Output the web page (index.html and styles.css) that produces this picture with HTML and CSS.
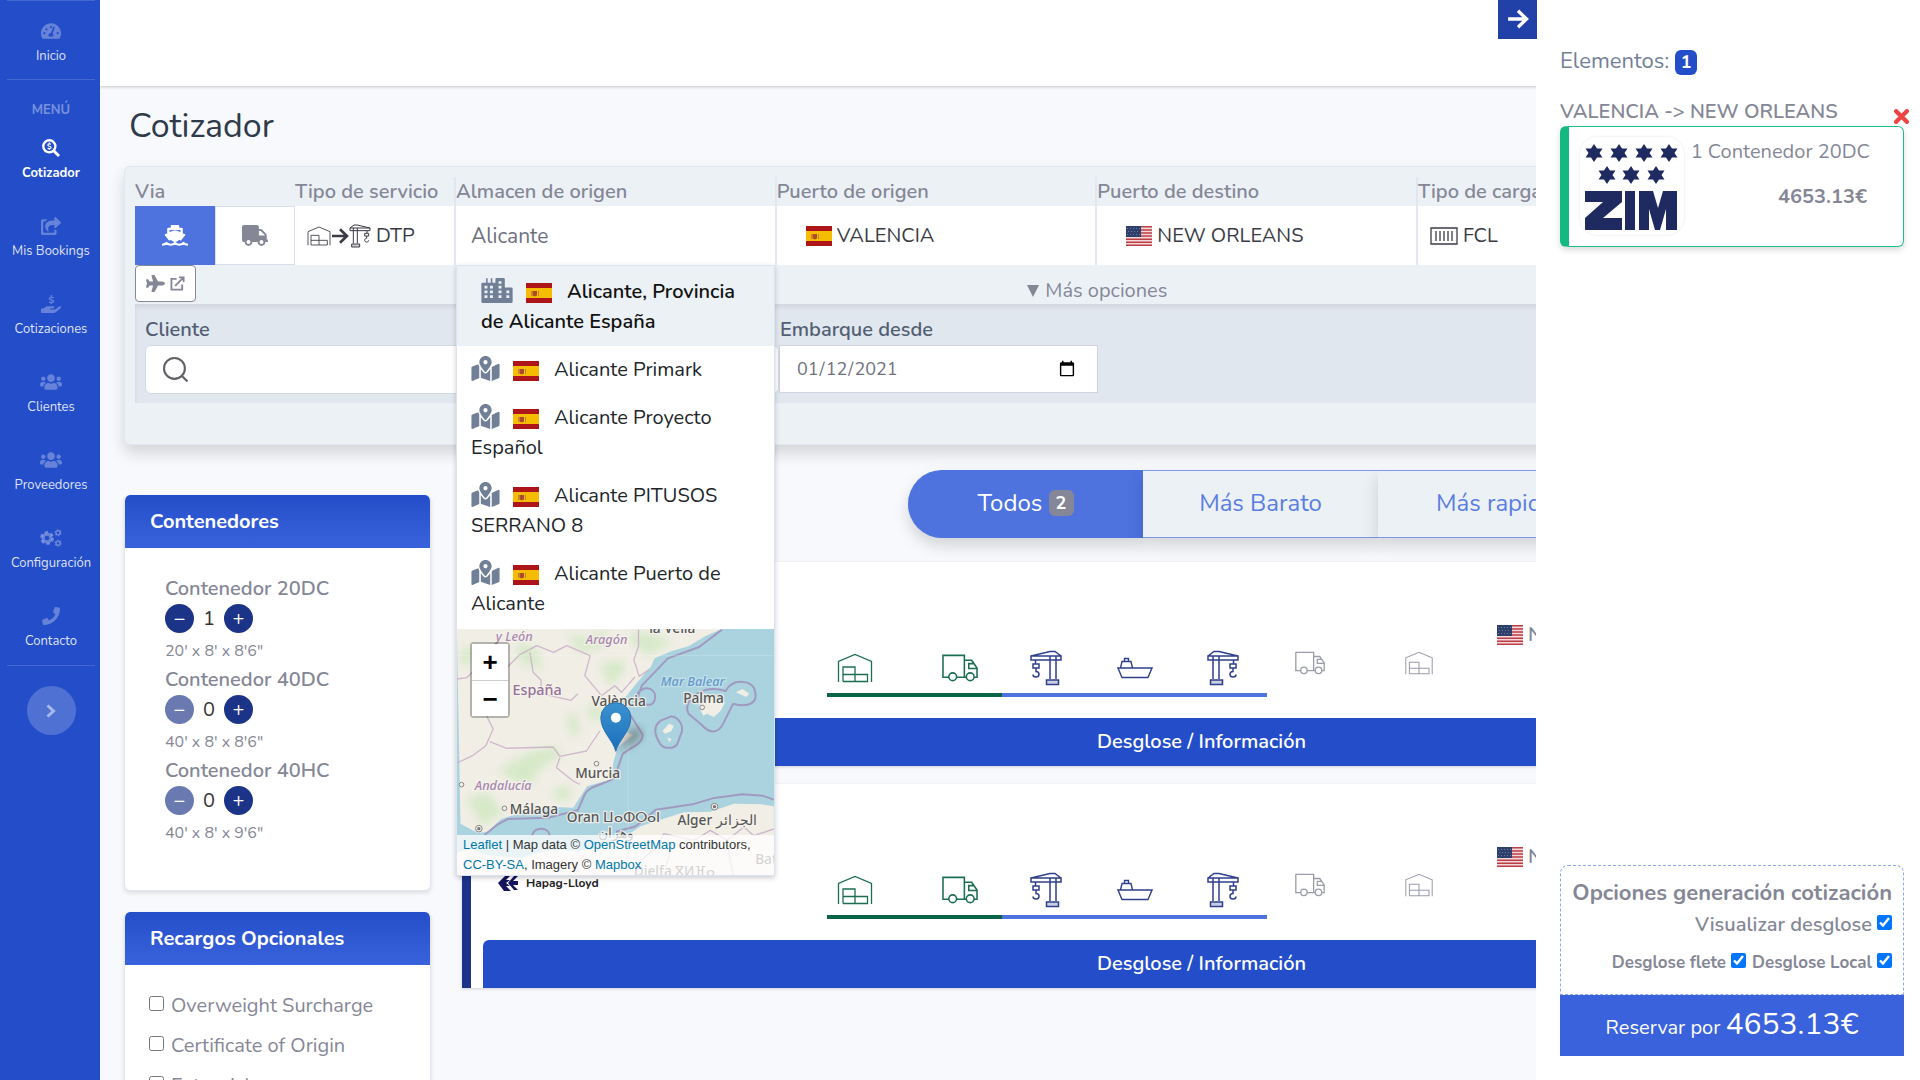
FILE: index.html
```html
<!DOCTYPE html>
<html lang="es">
<head>
<meta charset="utf-8">
<meta name="viewport" content="width=device-width, initial-scale=1">
<title>Cotizador</title>
<link rel="stylesheet" href="styles.css">
</head>
<body>
<svg class="sprite" aria-hidden="true">
  <symbol id="i-users" viewBox="0 0 640 512"><path d="M96 224c35.300 0 64-28.700 64-64s-28.700-64-64-64-64 28.700-64 64 28.700 64 64 64zm448 0c35.300 0 64-28.700 64-64s-28.700-64-64-64-64 28.700-64 64 28.700 64 64 64zm32 32h-64c-17.600 0-33.500 7.100-45.100 18.600 40.300 22.100 68.900 62 75.100 109.400h66c17.700 0 32-14.300 32-32v-32c0-35.300-28.700-64-64-64zm-256 0c61.900 0 112-50.100 112-112S381.900 32 320 32 208 82.100 208 144s50.100 112 112 112zm76.800 32h-8.300c-20.800 10-43.900 16-68.500 16s-47.600-6-68.500-16h-8.300C179.600 288 128 339.600 128 403.200V432c0 26.500 21.500 48 48 48h288c26.500 0 48-21.500 48-48v-28.800c0-63.600-51.600-115.200-115.200-115.200zm-223.700-13.400C161.500 263.100 145.600 256 128 256H64c-35.300 0-64 28.700-64 64v32c0 17.700 14.300 32 32 32h65.900c6.300-47.400 34.900-87.300 75.200-109.400z"/></symbol>
  <symbol id="i-phone" viewBox="0 0 512 512"><path d="M493.400 24.600l-104-24c-11.300-2.600-22.900 3.300-27.500 13.900l-48 112c-4.200 9.800-1.400 21.300 6.900 28l60.600 49.600c-36 76.700-98.900 140.500-177.200 177.200l-49.600-60.600c-6.800-8.300-18.200-11.100-28-6.900l-112 48C3.900 366.500-2 378.100.6 389.400l24 104C27.100 504.200 36.700 512 48 512c256.100 0 464-207.500 464-464 0-11.200-7.700-20.900-18.600-23.400z"/></symbol>
  <symbol id="i-truck" viewBox="0 0 640 512"><path d="M624 352h-16V243.900c0-12.700-5.100-24.900-14.100-33.900L494 110.100c-9-9-21.200-14.100-33.900-14.100H416V48c0-26.500-21.500-48-48-48H48C21.500 0 0 21.500 0 48v320c0 26.500 21.500 48 48 48h16c0 53 43 96 96 96s96-43 96-96h128c0 53 43 96 96 96s96-43 96-96h48c8.800 0 16-7.200 16-16v-32c0-8.800-7.200-16-16-16zM160 464c-26.500 0-48-21.500-48-48s21.500-48 48-48 48 21.500 48 48-21.500 48-48 48zm320 0c-26.500 0-48-21.500-48-48s21.500-48 48-48 48 21.500 48 48-21.500 48-48 48zm80-208H416V144h44.100l99.900 99.900V256z"/></symbol>
  <symbol id="i-ship" viewBox="0 0 640 512"><path fill-rule="evenodd" d="M240 0h160a24 24 0 0 1 24 24v40h56a32 32 0 0 1 32 32v110l44 16a22 22 0 0 1 10 36L462 386c-10-8-18-20-32-20-30 0-50 50-110 50s-80-50-110-50c-14 0-22 12-32 20L74 258a22 22 0 0 1 10-36l44-16V96a32 32 0 0 1 32-32h56V24a24 24 0 0 1 24-24zM184 120v50l136-46 136 46v-50z"/><path d="M0 482c64 0 84-16 110-40 30 26 60 40 106 40 44 0 74-14 104-40 30 26 60 40 104 40 46 0 76-14 106-40 26 24 46 40 110 40" fill="none" stroke="currentColor" stroke-width="52"/></symbol>
  <symbol id="i-plane" viewBox="0 0 576 512"><path d="M480 192H365.710L260.610 8.060A16.014 16.014 0 0 0 246.710 0h-65.500c-10.630 0-18.300 10.170-15.380 20.390L214.860 192H112l-43.200-57.600c-3.020-4.030-7.770-6.400-12.800-6.400H16.010C5.600 128-2.040 137.780.49 147.880L32 256 .49 364.120C-2.040 374.220 5.600 384 16.010 384H56c5.040 0 9.780-2.370 12.800-6.400L112 320h102.860l-49.030 171.600c-2.920 10.220 4.750 20.400 15.380 20.400h65.500c5.740 0 11.040-3.080 13.890-8.060L365.710 320H480c35.350 0 96-28.650 96-64s-60.650-64-96-64z"/></symbol>
  <symbol id="i-pin" viewBox="0 0 576 512"><path d="M288 0c-69.590 0-126 56.410-126 126 0 56.260 82.350 158.800 113.900 196.020 6.390 7.540 17.820 7.540 24.200 0C331.650 284.800 414 182.260 414 126 414 56.410 357.590 0 288 0zm0 168c-23.200 0-42-18.800-42-42s18.800-42 42-42 42 18.800 42 42-18.800 42-42 42zM20.120 215.950A32.006 32.006 0 0 0 0 245.660v250.320c0 11.320 11.430 19.060 21.940 14.860L160 448V214.920c-8.840-15.980-16.070-31.540-21.250-46.420L20.120 215.950zM288 359.670c-14.070 0-27.380-6.180-36.510-16.960-19.660-23.200-40.570-49.620-59.490-76.720v182l192 64V266c-18.920 27.090-39.820 53.520-59.490 76.720-9.130 10.770-22.440 16.950-36.510 16.950zm266.060-198.510L416 224v288l139.880-55.950A31.996 31.996 0 0 0 576 426.340V176.020c0-11.320-11.430-19.060-21.940-14.860z"/></symbol>
  <symbol id="i-share" viewBox="0 0 576 512"><path d="M568.482 177.448L424.479 313.433C409.300 327.768 384 317.140 384 295.985v-71.963c-144.575.97-205.566 35.113-164.775 171.353 4.483 14.973-12.846 26.567-25.006 17.330C155.252 383.105 120 326.488 120 269.339c0-143.937 117.599-172.500 264-173.312V24.012c0-21.174 25.317-31.768 40.479-17.448l144.003 135.988c10.020 9.463 10.028 25.425 0 34.896zM384 379.128V448H64V128h50.916a11.990 11.990 0 0 0 8.648-3.693c14.953-15.568 32.237-27.890 51.014-37.676C185.708 80.830 181.584 64 169.033 64H48C21.490 64 0 85.490 0 112v352c0 26.510 21.490 48 48 48h352c26.510 0 48-21.490 48-48v-88.806c0-8.288-8.197-14.066-16.011-11.302a71.830 71.830 0 0 1-34.189 3.377c-7.270-1.046-13.800 4.514-13.800 11.859z"/></symbol>
  <symbol id="i-hand" viewBox="0 0 576 512"><path d="M565.300 328.100c-11.800-10.700-30.200-10-42.600 0L430.300 402c-11.300 9.100-25.400 14-40 14H272c-8.800 0-16-7.200-16-16s7.200-16 16-16h78.300c15.900 0 30.700-10.900 33.300-26.600 3.300-20-12.100-37.400-31.600-37.400H192c-27 0-53.100 9.300-74.100 26.300L71.400 384H16c-8.800 0-16 7.200-16 16v96c0 8.800 7.200 16 16 16h356.800c14.500 0 28.600-4.900 40-14L564 377c15.200-12.100 16.400-35.300 1.300-48.900z"/><path d="M360 88c-20-28-120-34-120 12 0 60 122 22 122 78 0 48-104 44-128 12M300 0v50M300 206v50" fill="none" stroke="currentColor" stroke-width="40"/></symbol>
  <symbol id="i-gauge" viewBox="0 0 576 512"><path fill-rule="evenodd" d="M288 32C129 32 0 161 0 320c0 53 14 102 39 145 6 9 16 15 27 15h444c11 0 21-6 27-15 25-43 39-92 39-145C576 161 447 32 288 32zM64 320a32 32 0 1 1 64 0 32 32 0 1 1-64 0zm64-112a32 32 0 1 1 64 0 32 32 0 1 1-64 0zm128-64a32 32 0 1 1 64 0 32 32 0 1 1-64 0zm192 176a32 32 0 1 1 64 0 32 32 0 1 1-64 0zM353 128l46 15-62 187c26 22 24 58 14 86H225c-26-60 10-108 66-101z"/></symbol>
  <symbol id="i-search-dollar" viewBox="0 0 512 512"><g fill="none" stroke="currentColor"><circle cx="208" cy="208" r="172" stroke-width="68"/><path d="M340 340l145 145" stroke-width="84"/><path d="M258 152c-20-20-92-22-92 16 0 50 92 26 92 72 0 38-72 36-98 14M208 100v40M208 270v44" stroke-width="34"/></g></symbol>
  <symbol id="i-cogs" viewBox="0 0 640 512"><g fill="none" stroke="currentColor"><circle cx="205" cy="256" r="114" stroke-width="92"/><circle cx="205" cy="256" r="172" stroke-width="66" stroke-dasharray="100 80.100"/><circle cx="525" cy="106" r="58" stroke-width="44"/><circle cx="525" cy="106" r="88" stroke-width="30" stroke-dasharray="46 46"/><circle cx="525" cy="406" r="58" stroke-width="44"/><circle cx="525" cy="406" r="88" stroke-width="30" stroke-dasharray="46 46"/></g></symbol>
  <symbol id="i-city" viewBox="0 0 640 512"><path fill-rule="evenodd" d="M616 192H480V24a24 24 0 0 0-24-24H312a24 24 0 0 0-24 24v72h-64V16a16 16 0 0 0-32 0v80h-64V16a16 16 0 0 0-32 0v80H24a24 24 0 0 0-24 24v360a32 32 0 0 0 32 32h576a32 32 0 0 0 32-32V216a24 24 0 0 0-24-24zM64 160h60v56H64zm0 96h60v56H64zm0 96h60v56H64zm112-192h60v56h-60zm0 96h60v56h-60zm0 96h60v56h-60zM352 64h60v56h-60zm0 96h60v56h-60zm0 96h60v56h-60zm0 96h60v56h-60zm160-96h60v56h-60zm0 96h60v56h-60z"/></symbol>
  <symbol id="i-external" viewBox="0 0 16 16"><path d="M7 3H1.500v11.500H13V9M9.500 1.500h5v5M14.500 1.500L5.500 10.500" fill="none" stroke="currentColor" stroke-width="2"/></symbol>
  <symbol id="i-arrow" viewBox="0 0 20 18"><path d="M1 9h17M10 1.500L17.800 9 10 16.500" fill="none" stroke="currentColor" stroke-width="3"/></symbol>
  <symbol id="i-chevron" viewBox="0 0 10 14"><path d="M1.500 1.500L7.500 7l-6 5.500" fill="none" stroke="currentColor" stroke-width="3"/></symbol>
  <symbol id="i-cross" viewBox="0 0 14 14"><path d="M2 2l10 10M12 2L2 12" fill="none" stroke="currentColor" stroke-width="4" stroke-linecap="round"/></symbol>
  <symbol id="i-search" viewBox="0 0 24 24"><g fill="none" stroke="currentColor" stroke-width="2"><circle cx="11" cy="11" r="10"/><path d="M18 18l5.500 5.500"/></g></symbol>
  <symbol id="i-warehouse" viewBox="0 0 36 30"><path d="M1.500 29V8.500L18 1.500l16.500 7V29M6 28.500V14h12v14.500M6 21.500h24.500v7H6" fill="none" stroke="currentColor" stroke-width="1.300"/></symbol>
  <symbol id="i-lorry" viewBox="0 0 37 28"><g fill="none" stroke="currentColor" stroke-width="1.600"><path d="M7 23.500H1V1h22v22.500H15M23 6h7.500l5.500 8v9.500h-3M25 23.500h-2M35.500 14.500H27.500v-5h5"/><circle cx="11" cy="23" r="4"/><circle cx="29" cy="23" r="4"/></g></symbol>
  <symbol id="i-crane" viewBox="0 0 32 36"><g fill="none" stroke="currentColor" stroke-width="1.500"><path d="M20 6v23M26 6v23M1 6h30v4H1zM1 6l19-4.500h5L31 6M5.500 10v4M3 14h6v4H3zM6 18v3.500c4 0 4 5.500 0 5.500-2 0-3-1-3-2.500"/><path d="M16.500 30h12v4.500h-12z" fill="currentColor" fill-opacity=".25"/></g></symbol>
  <symbol id="i-boat" viewBox="0 0 36 22"><path d="M1 11h34l-4 9.500H5zM3.500 11L5 4.500h9L15.500 11M7.500 4.500V1.500h4v3" fill="none" stroke="currentColor" stroke-width="1.400"/></symbol>
  <symbol id="i-box" viewBox="0 0 28 18"><path d="M1 1h26v16H1zM6 4v10M10 4v10M14 4v10M18 4v10M22 4v10" fill="none" stroke="currentColor" stroke-width="1.300"/></symbol>
  <symbol id="f-es" viewBox="0 0 26 20"><path fill="#ad1519" d="M0 0h26v20H0z"/><path fill="#f5bd02" d="M0 5h26v10H0z"/><path fill="#c9803a" d="M5 8h1v5H5zM12 8h1v5h-1z"/><path fill="#ad4a2c" d="M6.500 8h4.500v4.500l-2.200 1-2.300-1z"/></symbol>
  <symbol id="f-us" viewBox="0 0 26 20"><path fill="#f3d9dc" d="M0 0h26v20H0z"/><path stroke="#bd3d44" stroke-width="1.500" d="M0 .8h26M0 3.900h26M0 7h26M0 10.100h26M0 13.200h26M0 16.300h26M0 19.300h26"/><path fill="#2f3f6c" d="M0 0h15v11H0z"/><path stroke="#6d7aa0" stroke-dasharray="1 2" d="M1 2.500h13M2 5.500h12M1 8.500h13"/></symbol>
</svg>

<div class="app">
  <nav class="sidebar" aria-label="Principal">
    <a class="nav-item nav-first" href="#"><svg class="ico20"><use href="#i-gauge"/></svg><span>Inicio</span></a>
    <p class="nav-heading">MENÚ</p>
    <a class="nav-item active" href="#"><svg class="ico18"><use href="#i-search-dollar"/></svg><span>Cotizador</span></a>
    <a class="nav-item" href="#"><svg class="ico20"><use href="#i-share"/></svg><span>Mis Bookings</span></a>
    <a class="nav-item" href="#"><svg class="ico20"><use href="#i-hand"/></svg><span>Cotizaciones</span></a>
    <a class="nav-item" href="#"><svg class="ico22"><use href="#i-users"/></svg><span>Clientes</span></a>
    <a class="nav-item" href="#"><svg class="ico22"><use href="#i-users"/></svg><span>Proveedores</span></a>
    <a class="nav-item" href="#"><svg class="ico22"><use href="#i-cogs"/></svg><span>Configuración</span></a>
    <a class="nav-item nav-last" href="#"><svg class="ico18"><use href="#i-phone"/></svg><span>Contacto</span></a>
    <button class="nav-toggle" type="button" aria-label="Expandir menú"><svg><use href="#i-chevron"/></svg></button>
  </nav>

  <div class="main">
    <header class="topbar"></header>
    <main class="content">
      <h1>Cotizador</h1>

      <form class="search">
        <div class="fields">
          <div class="field">
            <span class="label">Via</span>
            <div class="via">
              <button class="via-btn on" type="button" aria-label="Marítimo"><svg class="ico-via"><use href="#i-ship"/></svg></button>
              <button class="via-btn" type="button" aria-label="Terrestre"><svg class="ico-via"><use href="#i-truck"/></svg></button>
            </div>
          </div>
          <div class="field">
            <span class="label">Tipo de servicio</span>
            <button class="value" type="button"><span class="route"><svg class="r-wh"><use href="#i-warehouse"/></svg><svg class="r-ar"><use href="#i-arrow"/></svg><svg class="r-cr flip"><use href="#i-crane"/></svg></span>DTP</button>
          </div>
          <div class="field origin">
            <label class="label" for="almacen">Almacen de origen</label>
            <input class="value" id="almacen" type="text" value="Alicante" autocomplete="off">
            <div class="dropdown">
              <ul>
                <li class="selected"><svg class="ico-place"><use href="#i-city"/></svg><svg class="flag"><use href="#f-es"/></svg>Alicante, Provincia<br>de Alicante España</li>
                <li><svg class="ico-place"><use href="#i-pin"/></svg><svg class="flag"><use href="#f-es"/></svg>Alicante Primark</li>
                <li><svg class="ico-place"><use href="#i-pin"/></svg><svg class="flag"><use href="#f-es"/></svg>Alicante Proyecto<br>Español</li>
                <li><svg class="ico-place"><use href="#i-pin"/></svg><svg class="flag"><use href="#f-es"/></svg>Alicante PITUSOS<br>SERRANO 8</li>
                <li><svg class="ico-place"><use href="#i-pin"/></svg><svg class="flag"><use href="#f-es"/></svg>Alicante Puerto de<br>Alicante</li>
              </ul>
              <div class="map">
                <svg class="map-art" viewBox="51 90 951 738" preserveAspectRatio="xMidYMid slice">
                  <defs>
                    <filter id="soft" x="-20%" y="-20%" width="140%" height="140%"><feGaussianBlur stdDeviation="12"/></filter>
                    <linearGradient id="pinfill" x1="0" y1="0" x2="0" y2="1"><stop offset="0" stop-color="#3c92cf"/><stop offset="1" stop-color="#1b6fbd"/></linearGradient>
                    <clipPath id="iberia"><path d="M51 90h795l-50 22-50 30-50 14-52 22-10 24-40 46-50 62-8 60 8 24 36 14-46 36-14 48-4 48-74 22-42 64-56-2-90 14-70 22-40 38-30 4-52-28z"/></clipPath>
                  </defs>
                  <path fill="#aad3df" d="M51 90h951v738H51z"/>
                  <path fill="#f1eee6" d="M51 90h795l-50 22-50 30-50 14-52 22-10 24-40 46-50 62-8 60 8 24 36 14-46 36-14 48-4 48-74 22-42 64-56-2-90 14-70 22-40 38-30 4-52-28z"/>
                  <g clip-path="url(#iberia)" fill="#cfe8c0" filter="url(#soft)" opacity=".8">
                    <path d="M180 510l90-50 80-20 10 30-60 40-30 50-60-20z"/><path d="M80 600l60-20 50 60-60 40z"/><path d="M380 100l60 20 60-30v50l-80 20zM560 110l60-10 80 30-80 40z"/><path d="M230 130l60 20 20 60-70-20zM440 330l40-20 10 40-30 20zM340 570l40-10 20 30-50 20zM60 160l40-20 10 30-40 40z"/><path d="M380 370l20-40 20 60-20 30zM480 200l60-20 20 30-50 50z"/>
                  </g>
                  <path fill="#f1eee6" d="M1002 622l-40-6-80-2-70 24-80 2-70 22-60 20-50 34-70 30-70 10-80-4-90 24-90-6-60-20-40 10v68h951z"/>
                  <path fill="#f1eee6" d="M776 320l40-26 40 16-14 26-20 18-20-10-12 6zM888 280l20-10 20 14-8 10zM668 396l20-22 14 6-8 16-18 8zM682 416l14 4-8 8z"/>
                  <g fill="none" stroke="#9f8fbb" stroke-width="6" opacity=".85" stroke-linejoin="round">
                    <path d="M846 92l-68 52-94 34-78 82-14 40M592 290c6-30 55-30 54 4s-40 30-54-4M570 346l38 60c4 30-40 40-60 60l-24 70c-20 20-76 20-90 52l-20 46-90 22-120 4-30 16-40 32M1002 602l-34-12-60-4-90 12-60 18-110 16-60 50-60 16M276 710c10-30 50-26 54 0"/>
                    <path d="M858 276c20-40 70-30 84-10 20 50-20 60-62 48l-30 60c-20 40-50 20-64 4l-40-34c-20-40 40-90 112-68zM664 364l30-12c24 4 36 26 32 46l-14 38c-10 14-40 14-50 0-16-24-26-54 2-72z"/>
                  </g>
                  <g fill="none" stroke="#c9afc9" stroke-width="4" opacity=".85" stroke-linejoin="round">
                    <path d="M51 240l30-4 20-20 80 10 60-60 50-26 50 20 40-20 70 30-16 60 50 60 40-30 20 20 40-46M596 92v50l-14 40 16 50 30-20M270 160l10 60 24 24v40l90 20 20-20M160 330l-20 20 20 40-22 50-40 30-50 24M150 428l50 20 140-4 20 28 80-16 40-60M360 476l-10 30 50 40 20 10"/>
                    <path d="M1002 690l-60 20-30-26-50 40-50-30-50 30-90-20-20 40-60 50M860 724l20 104M700 730l-30 98"/>
                  </g>
                  <g fill="#f1eee6" stroke="#888" stroke-width="3"><circle cx="470" cy="494" r="7"/><circle cx="194" cy="628" r="7"/><circle cx="65" cy="557" r="7"/><circle cx="787" cy="325" r="7"/><circle cx="117" cy="689" r="10"/><circle cx="824" cy="623" r="10"/></g>
                  <g fill="#777"><circle cx="117" cy="689" r="5"/><circle cx="824" cy="623" r="5"/></g>
                  <path d="M565 90v738M51 170h951" stroke="#fff" stroke-opacity=".3" stroke-width="2"/>
                  <g class="map-labels">
                    <text class="region" x="168" y="126">y León</text><text class="region" x="438" y="136">Aragón</text><text class="region" x="105" y="574">Andalucía</text>
                    <text class="country" x="218" y="287">España</text><text class="sea" x="663" y="260">Mar Balear</text>
                    <text x="628" y="102">la Vella</text><text x="455" y="322">València</text><text x="730" y="311">Palma</text><text x="406" y="538">Murcia</text><text x="210" y="644">Málaga</text><text x="381" y="670">Oran ⵡⴰⵀⵔⴰⵏ</text><text x="713" y="677">Alger الجزائر</text><text x="475" y="716">وهران</text><text x="946" y="796">Batna</text><text x="582" y="832">Djelfa ⴵⵍⴼⴰ</text>
                  </g>
                  <path d="M532 454l40-64c20-14 40 0 32 22-10 24-40 30-72 42z" fill="#555" opacity=".5" filter="url(#soft)"/>
                  <path d="M528 457c-8-34-45-60-45-101a45 45 0 0 1 90 0c0 41-37 67-45 101z" fill="url(#pinfill)" stroke="#2a72ae" stroke-width="3"/><circle cx="528" cy="356" r="15" fill="#fff"/>
                </svg>
                <div class="zoom"><button type="button" aria-label="Acercar">+</button><button type="button" aria-label="Alejar">−</button></div>
                <p class="credits"><a href="#">Leaflet</a> | Map data © <a href="#">OpenStreetMap</a> contributors, <a href="#">CC-BY-SA</a>, Imagery © <a href="#">Mapbox</a></p>
              </div>
            </div>
          </div>
          <div class="field">
            <span class="label">Puerto de origen</span>
            <button class="value port" type="button"><svg class="flag"><use href="#f-es"/></svg>VALENCIA</button>
          </div>
          <div class="field">
            <span class="label">Puerto de destino</span>
            <button class="value port" type="button"><svg class="flag"><use href="#f-us"/></svg>NEW ORLEANS</button>
          </div>
          <div class="field">
            <span class="label">Tipo de carga</span>
            <button class="value" type="button"><svg class="ico-box"><use href="#i-box"/></svg>FCL</button>
          </div>
          <button class="air" type="button" aria-label="Aéreo"><svg class="ico-plane"><use href="#i-plane"/></svg><svg class="ico-ext"><use href="#i-external"/></svg></button>
          <button class="more" type="button"><i class="caret"></i>Más opciones</button>
        </div>
        <div class="options">
          <div class="opt client">
            <label for="cliente">Cliente</label>
            <div class="client-box"><svg><use href="#i-search"/></svg><input id="cliente" type="text"></div>
          </div>
          <div class="opt date">
            <label for="embarque">Embarque desde</label>
            <input id="embarque" type="date" value="2021-01-12">
          </div>
        </div>
      </form>

      <div class="columns">
        <div class="filters">
          <section class="panel">
            <h2>Contenedores</h2>
            <div class="containers">
              <div class="unit"><h3>Contenedor 20DC</h3><div class="stepper"><button type="button" aria-label="Quitar">−</button><span>1</span><button type="button" aria-label="Añadir">+</button></div><p>20' x 8' x 8'6"</p></div>
              <div class="unit"><h3>Contenedor 40DC</h3><div class="stepper"><button type="button" aria-label="Quitar" disabled>−</button><span>0</span><button type="button" aria-label="Añadir">+</button></div><p>40' x 8' x 8'6"</p></div>
              <div class="unit"><h3>Contenedor 40HC</h3><div class="stepper"><button type="button" aria-label="Quitar" disabled>−</button><span>0</span><button type="button" aria-label="Añadir">+</button></div><p>40' x 8' x 9'6"</p></div>
            </div>
          </section>
          <section class="panel">
            <h2>Recargos Opcionales</h2>
            <div class="extras">
              <label><input type="checkbox">Overweight Surcharge</label>
              <label><input type="checkbox">Certificate of Origin</label>
              <label><input type="checkbox">Extra risk</label>
            </div>
          </section>
        </div>

        <div class="results">
          <div class="tabs">
            <button class="tab on" type="button">Todos <span class="count">2</span></button>
            <button class="tab" type="button">Más Barato</button>
            <button class="tab" type="button">Más rapido</button>
          </div>
          <article class="result">
            <div class="summary">
              <div class="carrier"></div>
              <div class="route-line">
                <div class="leg land"><svg class="w36"><use href="#i-warehouse"/></svg><svg class="w36"><use href="#i-lorry"/></svg></div>
                <div class="leg sea-leg"><svg class="w32"><use href="#i-crane"/></svg><svg class="w36"><use href="#i-boat"/></svg><svg class="w32 flip"><use href="#i-crane"/></svg></div>
                <div class="leg off"><svg class="w30"><use href="#i-lorry"/></svg><svg class="w30"><use href="#i-warehouse"/></svg></div>
              </div>
              <div class="dest"><svg class="flag"><use href="#f-us"/></svg>NEW ORLEANS</div>
            </div>
            <button class="detail" type="button">Desglose / Información</button>
          </article>
          <article class="result">
            <div class="summary">
              <div class="carrier"><svg class="hl-mark" viewBox="0 0 20 16"><path d="M8 0h5L8 5h4l-4 3 4 3H8l5 5H6L0 8z"/><path d="M16 1h4l-5 5h5v4h-5l5 5h-4l-6-7z"/></svg><b>Hapag-Lloyd</b></div>
              <div class="route-line">
                <div class="leg land"><svg class="w36"><use href="#i-warehouse"/></svg><svg class="w36"><use href="#i-lorry"/></svg></div>
                <div class="leg sea-leg"><svg class="w32"><use href="#i-crane"/></svg><svg class="w36"><use href="#i-boat"/></svg><svg class="w32 flip"><use href="#i-crane"/></svg></div>
                <div class="leg off"><svg class="w30"><use href="#i-lorry"/></svg><svg class="w30"><use href="#i-warehouse"/></svg></div>
              </div>
              <div class="dest"><svg class="flag"><use href="#f-us"/></svg>NEW ORLEANS</div>
            </div>
            <button class="detail" type="button">Desglose / Información</button>
          </article>
        </div>
      </div>
    </main>
  </div>

  <aside class="cart">
    <button class="cart-toggle" type="button" aria-label="Ocultar"><svg><use href="#i-arrow"/></svg></button>
    <p class="cart-count">Elementos: <span>1</span></p>
    <div class="cart-head"><h2>VALENCIA -&gt; NEW ORLEANS</h2><button type="button" aria-label="Eliminar"><svg><use href="#i-cross"/></svg></button></div>
    <div class="cart-card">
      <svg class="zim" viewBox="0 0 104 98" role="img" aria-label="ZIM">
        <defs><path id="star" d="M0-9l3 4.500h5.500L5.500 0l3 4.500H3L0 9l-3-4.500h-5.500l3-4.500-3-4.500H-3z"/></defs>
        <g fill="#1f2a60"><use href="#star" x="14" y="16"/><use href="#star" x="39" y="16"/><use href="#star" x="64" y="16"/><use href="#star" x="89" y="16"/><use href="#star" x="27" y="38"/><use href="#star" x="51" y="38"/><use href="#star" x="76" y="38"/>
        <path d="M5 54h37v11L23 81h19v12H5V81l18-16H5zM45 54h10v39H45zM59 54h14l5 17 5-17h14v39H86V72l-6 21h-5l-6-21v21H59z"/></g>
      </svg>
      <div class="cart-info"><p>1 Contenedor 20DC</p><strong>4653.13€</strong></div>
    </div>
    <div class="cart-options">
      <h3>Opciones generación cotización</h3>
      <label>Visualizar desglose<input type="checkbox" checked></label>
      <div class="cart-sub"><label>Desglose flete<input type="checkbox" checked></label><label>Desglose Local<input type="checkbox" checked></label></div>
    </div>
    <button class="reserve" type="button">Reservar por <span>4653.13€</span></button>
  </aside>
</div>
</body>
</html>
```
FILE: styles.css
```css
* { box-sizing: border-box; }

body {
  margin: 0;
  font-family: Nunito, Lato, sans-serif;
  font-size: 20px;
  line-height: 30px;
  color: #858796;
  background: #f8f9fc;
}

h1, h2, h3, p, ul { margin: 0; padding: 0; font-size: inherit; }
button, input { font: inherit; color: inherit; margin: 0; }
button { border: 0; padding: 0; background: none; }
svg { display: block; fill: currentColor; flex: none; }
.sprite { position: absolute; width: 0; height: 0; }
.flip { transform: scaleX(-1); }
.flag { width: 26px; height: 20px; }

.app { position: relative; display: flex; height: 100vh; overflow: hidden; }

/* Sidebar */
.sidebar {
  display: flex;
  flex-direction: column;
  flex: none;
  width: 100px;
  padding: 0 5px 0 7px;
  background: #244ec9;
}
.nav-item {
  display: flex;
  flex-direction: column;
  align-items: center;
  height: 78px;
  padding-top: 20px;
  font-size: 13px;
  line-height: 20px;
  white-space: nowrap;
  text-decoration: none;
  color: rgba(255, 255, 255, .85);
}
.nav-item svg { height: 20px; margin-bottom: 5px; color: rgba(255, 255, 255, .3); }
.nav-first { height: 80px; border: solid rgba(255, 255, 255, .15); border-width: 1px 0; }
.nav-last { height: 80px; border-bottom: 1px solid rgba(255, 255, 255, .15); }
.nav-item.active, .nav-item.active svg { color: #fff; font-weight: 700; }
.nav-heading { height: 38px; padding-top: 15px; font-size: 13px; line-height: 30px; font-weight: 700; text-align: center; color: rgba(255, 255, 255, .4); }
.ico18 { width: 18px; }
.ico20 { width: 20px; }
.ico22 { width: 22px; }
.nav-toggle {
  display: flex;
  align-items: center;
  justify-content: center;
  width: 49px;
  height: 49px;
  margin: 20px auto 0;
  border-radius: 50%;
  background: rgba(255, 255, 255, .2);
  color: rgba(255, 255, 255, .5);
}
.nav-toggle svg { width: 10px; height: 14px; }

/* Page */
.main { flex: 1; min-width: 0; overflow: hidden; }
.topbar { height: 86px; background: #fff; box-shadow: 0 1px 3px rgba(58, 59, 69, .25); }
.content { padding: 20px 0 0 24px; }
h1 { margin-left: 5px; font-size: 34px; line-height: 40px; font-weight: 400; color: #2f3a4b; }

/* Search form */
.search {
  margin-top: 20px;
  height: 279px;
  padding: 10px 0 0 10px;
  border: 1px solid #e3e6f0;
  border-radius: 6px;
  background: #ecf1f6;
  box-shadow: 0 8px 16px rgba(0, 0, 0, .15);
}
.fields { display: grid; grid-template-columns: 160px 161px repeat(3, 1fr) 501px; }
.field { position: relative; border-right: 2px solid #e1e6ef; }
.field:first-child { border: 0; }
.label { display: block; height: 29px; font-weight: 600; line-height: 30px; white-space: nowrap; }
.field .value {
  display: flex;
  align-items: center;
  gap: 5px;
  width: 100%;
  height: 59px;
  padding: 0 12px;
  border: 0;
  background: #fff;
  color: #3a3b45;
}
.field input.value { padding: 0 15px; font-size: 21px; color: #6e707e; }
.field .port { padding: 0 29px; }
.via { display: flex; height: 59px; }
.via-btn { flex: 1; display: flex; align-items: center; justify-content: center; border: 1px solid #d8dfea; background: #fff; }
.via-btn.on { background: #4e73df; border-color: #4e73df; color: #fff; }
.ico-via { width: 26px; height: 21px; }
.route { display: flex; align-items: center; }
.r-wh { width: 24px; height: 20px; }
.r-ar { width: 18px; height: 16px; }
.r-cr { width: 22px; height: 24px; }
.ico-box { width: 28px; height: 18px; }
.air {
  display: flex;
  align-items: center;
  justify-content: center;
  gap: 5px;
  width: 61px;
  height: 37px;
  border: 1px solid #858796;
  border-radius: 4px;
  background: #fff;
}
.ico-plane { width: 19px; height: 17px; }
.ico-ext { width: 15px; height: 15px; }
.more { grid-column: 4 / 6; display: flex; align-items: center; justify-content: center; gap: 6px; height: 39px; padding-top: 12px; }
.caret { border: solid transparent; border-width: 12px 6px 0; border-top-color: #858796; }
.options {
  display: grid;
  grid-template-columns: 634px 319px;
  height: 99px;
  padding: 10px 0 0 10px;
  background: #e1e7ef;
  box-shadow: inset 0 3px 4px rgba(58, 59, 69, .1);
}
.opt label { display: block; height: 31px; line-height: 31px; font-weight: 600; color: #525f73; }
.opt.date label { padding-left: 1px; }
.client-box { display: flex; align-items: center; height: 49px; padding-left: 17px; border: 1px solid #d1d9e6; border-radius: 6px; background: #fff; color: #5e6066; }
.client-box svg { width: 25px; height: 25px; }
.client-box input { flex: 1; height: 40px; border: 0; background: none; }
.opt.date input { width: 100%; height: 48px; padding: 0 19px 0 16px; border: 1px solid #d1d3e2; background: #fff; font-size: 18px; color: #6e707e; }

/* Suggestions list */
.dropdown {
  position: absolute;
  z-index: 5;
  top: 88px;
  left: 0;
  right: 0;
  border: 1px solid #dde3ee;
  background: #fff;
  box-shadow: 0 2px 5px rgba(0, 0, 0, .2);
  color: #212529;
}
.dropdown ul { padding-bottom: 1px; list-style: none; }
.dropdown li { padding: 9px 14px; white-space: nowrap; }
.dropdown li.selected { padding: 11px 24px 9px; background: #ecf1f6; font-weight: 600; color: #111; }
.dropdown li svg { display: inline-block; vertical-align: middle; }
.ico-place { width: 29px; height: 25px; margin: -10px 13px -4px 0; color: #718096; }
.selected .ico-place { width: 32px; }
.dropdown .flag { margin: -4px 15px -4px 0; }
.map { position: relative; height: 246px; overflow: hidden; background: #aad3df; }
.map-art { width: 100%; height: 100%; }
.map-labels { font-family: "Noto Sans", sans-serif; font-size: 41px; font-weight: 500; fill: #555; stroke: #f5f2ec; stroke-width: 8px; stroke-opacity: .8; paint-order: stroke; }
.map-labels .region { font-size: 38px; font-style: italic; fill: #a888ae; }
.map-labels .country { font-size: 43px; fill: #957299; }
.map-labels .sea { font-size: 38px; font-style: italic; fill: #6699cc; stroke: #c6e2ea; }
.zoom { position: absolute; top: 13px; left: 13px; width: 40px; border: 2px solid rgba(0, 0, 0, .25); border-radius: 4px; background-clip: padding-box; }
.zoom button { display: block; width: 36px; height: 36px; background: #fff; font: bold 26px/36px "Liberation Sans", sans-serif; color: #000; }
.zoom button + button { border-top: 1px solid #ccc; }
.credits { position: absolute; left: 0; right: 0; bottom: 0; padding: 0 6px; background: rgba(255, 255, 255, .75); font: 13px/20px "Liberation Sans", sans-serif; color: #333; }
.credits a { color: #0078a8; text-decoration: none; }

/* Filters and results */
.columns { display: flex; gap: 31px; margin-top: 25px; }
.filters { flex: none; width: 307px; margin-top: 25px; }
.panel { margin-bottom: 21px; border: 1px solid #e3e6f0; border-top: 0; border-radius: 6px; background: #fff; box-shadow: 0 2px 4px rgba(58, 59, 69, .15); overflow: hidden; }
.panel h2 { height: 53px; padding-left: 25px; line-height: 53px; font-weight: 700; color: #fff; background: linear-gradient(#244ec9, #3a62dd); }
.containers { height: 342px; padding: 26px 40px 0; }
.unit { height: 91px; }
.unit h3 { font-weight: 600; }
.unit p { font-size: 16px; line-height: 36px; }
.stepper { display: flex; align-items: center; height: 29px; color: #333; }
.stepper span { width: 30px; text-align: center; }
.stepper button { width: 29px; height: 29px; border-radius: 50%; background: #1b3488; font-size: 20px; line-height: 28px; color: #fff; }
.stepper button:disabled { opacity: .65; }
.extras { padding: 21px 23px; }
.extras label { display: flex; align-items: center; gap: 7px; height: 40px; padding-left: 1px; }
input[type="checkbox"] { width: 15px; height: 15px; margin: 0 0 5px; accent-color: #0075ff; }

.results { flex: 1; min-width: 0; }
.tabs { display: flex; height: 68px; margin: 0 0 24px 446px; }
.tab {
  width: 235px;
  padding-bottom: 2px;
  border: solid #7d99ea;
  border-width: 1px 0;
  background: #ecf1f6;
  box-shadow: 0 8px 16px rgba(0, 0, 0, .15);
  font-size: 24px;
  color: #5a7de2;
}
.tab.on { border-color: #4e73df; border-radius: 34px 0 0 34px; background: #4e73df; color: #fff; }
.count { display: inline-block; width: 25px; height: 26px; border-radius: 6px; background: #858796; font-size: 18px; line-height: 26px; font-weight: 700; vertical-align: 2px; }
.result { height: 204px; margin-bottom: 18px; border-left: 9px solid #1b3488; padding-left: 12px; background: #fff; box-shadow: 0 1px 3px rgba(58, 59, 69, .2); }
.summary { display: flex; height: 156px; }
.carrier { display: flex; align-items: flex-end; gap: 8px; width: 344px; height: 107px; padding-left: 15px; font-size: 12px; line-height: 16px; color: #222; }
.hl-mark { width: 20px; height: 16px; fill: #14145f; }
.route-line { display: flex; align-items: flex-end; height: 135px; }
.leg { display: flex; align-items: center; justify-content: space-between; height: 52px; padding-bottom: 3px; }
.land { width: 175px; padding-right: 24px; padding-left: 10px; border-bottom: 4px solid #0a6447; color: #1c6e50; }
.sea-leg { width: 265px; padding-right: 28px; padding-left: 28px; border-bottom: 4px solid #4e73df; color: #2f3f8c; }
.off { width: 167px; padding: 0 0 13px 28px; border-bottom: 4px solid transparent; color: #9a9caa; }
.w36 { width: 36px; height: 30px; }
.w32 { width: 32px; height: 36px; }
.w30 { width: 30px; height: 24px; }
.dest { display: flex; align-items: center; gap: 5px; height: 30px; margin: 58px 0 0 63px; font-weight: 600; white-space: nowrap; }
.detail { display: block; width: 100%; height: 48px; border-radius: 6px 0 0 0; background: #244ec9; line-height: 48px; font-weight: 600; color: #fff; }

/* Quote basket */
.cart { position: absolute; z-index: 10; top: 0; right: 0; bottom: 0; width: 20%; min-width: 384px; padding: 46px 16px 24px 24px; display: flex; flex-direction: column; background: #fff; }
.cart-toggle { position: absolute; top: 0; left: -38px; display: flex; align-items: center; justify-content: center; width: 39px; height: 39px; padding-bottom: 2px; background: #2141a8; color: #fff; }
.cart-toggle svg { width: 22px; height: 20px; }
.cart-count { font-size: 22px; line-height: 30px; color: #718096; }
.cart-count span { display: inline-block; width: 22px; height: 25px; border-radius: 6px; background: #244ec9; font-size: 18px; line-height: 25px; font-weight: 700; text-align: center; color: #fff; }
.cart-head { display: flex; align-items: center; justify-content: space-between; height: 30px; margin: 20px -5px 0 0; }
.cart-head h2 { padding-top: 2px; font-weight: 600; }
.cart-head button { padding-top: 10px; color: #ee4444; }
.cart-head svg { width: 15px; height: 15px; }
.cart-card { display: flex; height: 121px; padding: 10px 33px 0 11px; border: 1px solid #1cbf8a; border-left: 9px solid #13b981; border-radius: 6px; box-shadow: 0 3px 6px rgba(0, 0, 0, .15); }
.zim { width: 104px; height: 98px; border-radius: 18px; box-shadow: 0 0 3px rgba(0, 0, 0, .1); }
.cart-info { flex: 1; text-align: right; white-space: nowrap; }
.cart-info strong { display: block; margin: 15px 3px 0 0; font-weight: 700; }
.cart-options { margin-top: auto; height: 130px; padding: 11px 11px 0; border: 1px dashed #8ea9ef; border-radius: 8px 8px 0 0; text-align: right; font-weight: 600; }
.cart-options h3 { font-size: 22px; line-height: 32px; font-weight: 700; white-space: nowrap; }
.cart-options label { display: flex; align-items: center; justify-content: flex-end; gap: 5px; line-height: 32px; }
.cart-sub { display: flex; justify-content: flex-end; gap: 6px; margin-top: 6px; font-size: 17px; font-weight: 700; }
.reserve { height: 61px; padding-top: 2px; background: #3a62dd; color: #fff; }
.reserve span { font-size: 30px; }
```
